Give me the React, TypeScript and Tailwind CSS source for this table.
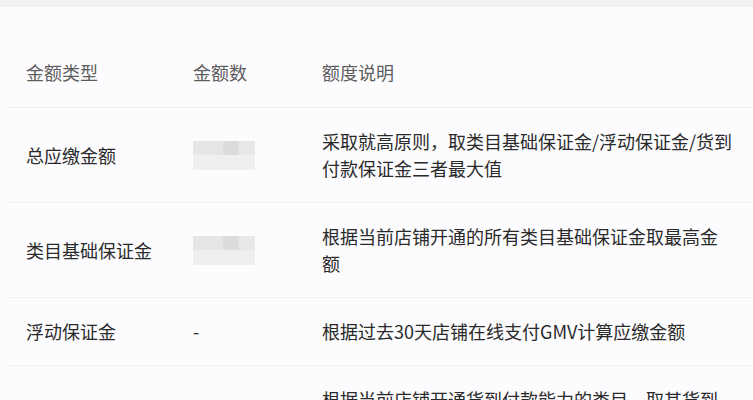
import React from "react";

function Blur() {
  return (
    <div className="flex h-[29px] w-[62px] flex-col">
      <div className="flex h-[14px] bg-[#e6e6e8]">
        <div className="w-[30px]" />
        <div className="w-[16px] bg-[#dcdcde]" />
        <div className="flex-1 bg-[#e8e8ea]" />
      </div>
      <div className="flex-1 bg-[#efeff1]" />
    </div>
  );
}

const rows: { type: string; amount: React.ReactNode; desc: string }[] = [
  {
    type: "总应缴金额",
    amount: <Blur />,
    desc: "采取就高原则，取类目基础保证金/浮动保证金/货到付款保证金三者最大值",
  },
  {
    type: "类目基础保证金",
    amount: <Blur />,
    desc: "根据当前店铺开通的所有类目基础保证金取最高金额",
  },
  {
    type: "浮动保证金",
    amount: <span>-</span>,
    desc: "根据过去30天店铺在线支付GMV计算应缴金额",
  },
  {
    type: "货到付款保证金",
    amount: <span>-</span>,
    desc: "根据当前店铺开通货到付款能力的类目，取其货到付款保证金最高金额",
  },
];

export default function App() {
  return (
    <div
      className="h-[400px] w-[753px] overflow-hidden bg-[#fcfcfe] text-[18px] leading-[27px]"
      style={{ fontFamily: '"Noto Sans CJK SC", "Noto Sans", sans-serif' }}
    >
      <div className="h-[7px] bg-[#f2f2f4]" />
      <div className="ml-[5px]">
        <div className="flex border-b border-[#f0f0f2] pb-[21px] pt-[52px] text-[#5c5c5c]">
          <div className="w-[188px] pl-[21px]">金额类型</div>
          <div className="w-[129px]">金额数</div>
          <div className="flex-1">额度说明</div>
        </div>
        {rows.map((r) => (
          <div
            key={r.type}
            className="flex items-center border-b border-[#f0f0f2] py-[20px] text-[#2a2a2a]"
          >
            <div className="w-[188px] pl-[21px]">{r.type}</div>
            <div className="w-[129px]">{r.amount}</div>
            <div className="w-[413px]">{r.desc}</div>
          </div>
        ))}
      </div>
    </div>
  );
}
